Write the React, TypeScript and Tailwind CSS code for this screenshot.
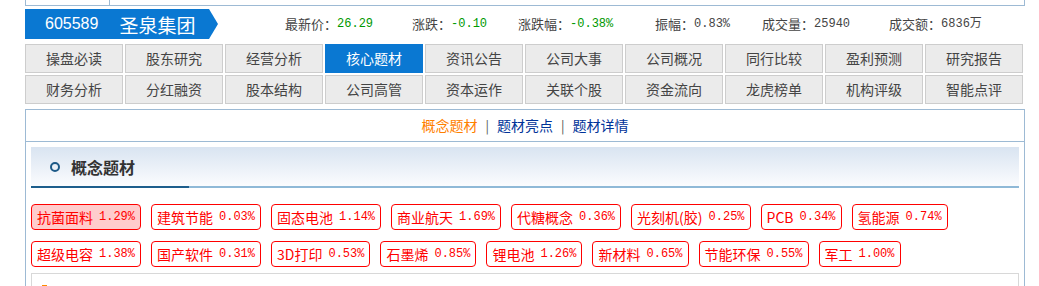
import React from 'react';

const CN = "font-['Noto_Sans_CJK_SC','Noto_Sans',sans-serif]";

const tabs1 = ['操盘必读', '股东研究', '经营分析', '核心题材', '资讯公告', '公司大事', '公司概况', '同行比较', '盈利预测', '研究报告'];
const tabs2 = ['财务分析', '分红融资', '股本结构', '公司高管', '资本运作', '关联个股', '资金流向', '龙虎榜单', '机构评级', '智能点评'];

const stats = [
  { label: '最新价', value: '26.29', w: 'w-[127px]' },
  { label: '涨跌', value: '-0.10', w: 'w-[106px]' },
  { label: '涨跌幅', value: '-0.38%', w: 'w-[137px]' },
  { label: '振幅', value: '0.83%', w: 'w-[107px]', plain: true },
  { label: '成交量', value: '25940', w: 'w-[127px]', plain: true },
  { label: '成交额', value: '6836万', w: '', plain: true },
];

const tags = [
  ['抗菌面料', '1.29%'],
  ['建筑节能', '0.03%'],
  ['固态电池', '1.14%'],
  ['商业航天', '1.69%'],
  ['代糖概念', '0.36%'],
  ['光刻机(胶)', '0.25%'],
  ['PCB', '0.34%'],
  ['氢能源', '0.74%'],
  ['超级电容', '1.38%'],
  ['国产软件', '0.31%'],
  ['3D打印', '0.53%'],
  ['石墨烯', '0.85%'],
  ['锂电池', '1.26%'],
  ['新材料', '0.65%'],
  ['节能环保', '0.55%'],
  ['军工', '1.00%'],
];

function Tab({ label, active }: { label: string; active?: boolean }) {
  return (
    <div
      className={`h-[29px] flex items-center justify-center text-[14px] border ${
        active ? 'bg-[#0a78d2] border-[#0a78d2] text-white' : 'bg-[#ebebeb] border-[#cdcdcd] text-[#444]'
      }`}
    >
      {label}
    </div>
  );
}

export default function App() {
  return (
    <div className={`w-[1039px] h-[286px] overflow-hidden bg-white pl-[25px] ${CN}`}>
      {/* tail of the block above */}
      <div className="w-[1000px] h-[6px] flex border-x border-b border-[#9dbad4]">
        <div className="w-[84px] border-r border-[#9dbad4]" />
      </div>

      {/* stock header */}
      <div className="mt-[3px] h-[30px] flex items-center">
        <div className="relative h-[30px] w-[184px] bg-[#0a78d2] flex items-center text-white">
          <span className="ml-[20px] text-[16px] font-['Liberation_Sans',sans-serif]">605589</span>
          <span className="ml-[21px] text-[19px] leading-none">圣泉集团</span>
          <div className="absolute left-[184px] top-0 w-0 h-0 border-y-[15px] border-y-transparent border-l-[9px] border-l-[#0a78d2]" />
        </div>
        <div className="ml-[76px] flex items-center text-[13px] text-[#444]">
          {stats.map((s) => (
            <div key={s.label} className={`${s.w} flex items-center whitespace-nowrap`}>
              <span>{s.label}：</span>
              <span className={`font-['Liberation_Mono','Noto_Sans_CJK_SC',monospace] text-[12px] ${s.plain ? 'text-[#444]' : 'text-[#009900]'}`}>
                {s.value}
              </span>
            </div>
          ))}
        </div>
      </div>

      {/* nav tabs */}
      <div className="mt-[5px] w-[998px] grid grid-cols-10 gap-x-[2px] gap-y-[2px]">
        {tabs1.map((t) => (
          <Tab key={t} label={t} active={t === '核心题材'} />
        ))}
        {tabs2.map((t) => (
          <Tab key={t} label={t} />
        ))}
      </div>

      {/* content */}
      <div className="mt-[5px] w-[1000px] h-[200px] border-x border-t border-[#9dbad4]">
        <div className="h-[32px] border-b border-[#9dbad4] flex items-center justify-center text-[14px]">
          <span className="text-[#ff7f00]">概念题材</span>
          <span className="mx-[8px] text-[#555] text-[13px]">|</span>
          <span className="text-[#003399]">题材亮点</span>
          <span className="mx-[8px] text-[#555] text-[13px]">|</span>
          <span className="text-[#003399]">题材详情</span>
        </div>

        <div className="px-[5px] pt-[5px]">
          <div className="h-[39px] flex items-center pl-[19px] bg-linear-to-b from-[#d9e4f1] to-[#fbfcfe]">
            <div className="w-[10px] h-[10px] rounded-full border-2 border-[#1d5a87]" />
            <span className="ml-[11px] text-[16px] font-bold text-[#333]">概念题材</span>
          </div>
          <div className="h-[2px] flex">
            <div className="w-[158px] bg-[#1d5e8c]" />
            <div className="flex-1 bg-[#8fb9d7]" />
          </div>

          <div className="mt-[16px] flex flex-wrap gap-x-[10px] gap-y-[11px] w-[930px]">
            {tags.map(([name, pct], i) => (
              <div
                key={name}
                className={`h-[26px] px-[5px] flex items-center border border-[#ff0000] rounded-[4px] text-[#ff0000] whitespace-nowrap ${
                  i === 0 ? 'bg-[#ffcccc]' : 'bg-white'
                }`}
              >
                <span className="text-[14px]">{name}</span>
                <span className="ml-[6px] text-[12px] font-['Liberation_Mono',monospace]">{pct}</span>
              </div>
            ))}
          </div>

          <div className="mt-[6px] h-[60px] border border-[#d8d8d8] px-[10px] pt-[10px] flex items-start">
            <div className="w-[5px] h-[14px] bg-[#ff8a00] mt-[1px]" />
            <span className="ml-[8px] text-[13px] text-[#333]">题材要点</span>
          </div>
        </div>
      </div>
    </div>
  );
}
